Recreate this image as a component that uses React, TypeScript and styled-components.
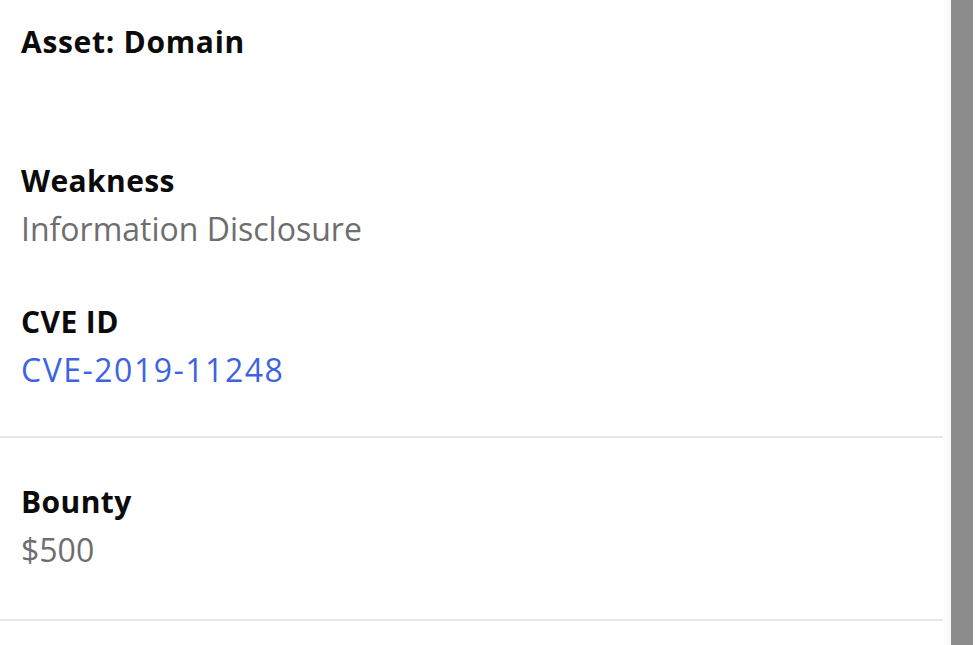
import * as React from "react";
import styled, { createGlobalStyle } from "styled-components";

const GlobalStyle = createGlobalStyle`
  html, body {
    margin: 0;
    padding: 0;
    background: #ffffff;
    font-family: "Open Sans", "Liberation Sans", sans-serif;
  }
`;

const Page = styled.div`
  display: flex;
  flex-direction: row;
  width: 980px;
  height: 645px;
  overflow: hidden;
`;

const Panel = styled.div`
  width: 943px;
  display: flex;
  flex-direction: column;
`;

const Section = styled.section<{ $top: number; $bottom: number }>`
  padding: ${(p) => p.$top}px 21px ${(p) => p.$bottom}px;
  border-bottom: 2px solid #e6e6e6;
`;

const AssetTitle = styled.h2`
  margin: 0 0 90px;
  font-size: 30px;
  line-height: 48px;
  font-weight: 700;
  letter-spacing: 0.7px;
  color: #0b0b0b;
`;

const Field = styled.div`
  display: flex;
  flex-direction: column;
  & + & {
    margin-top: 44px;
  }
`;

const Label = styled.div`
  font-size: 30px;
  line-height: 49px;
  font-weight: 700;
  letter-spacing: 0.4px;
  color: #0b0b0b;
`;

const Value = styled.div<{ $link?: boolean }>`
  font-size: 32px;
  line-height: 48px;
  font-weight: 400;
  letter-spacing: ${(p) => (p.$link ? "1.5px" : "0")};
  color: ${(p) => (p.$link ? "#3d63e3" : "#6e6e6e")};
`;

const Gutter = styled.div`
  width: 8px;
  background: linear-gradient(to right, #ffffff, #f7f7f7);
`;

const ScrollBar = styled.div`
  width: 22px;
  background: #8c8c8c;
`;

export default function App() {
  return (
    <>
      <GlobalStyle />
      <Page>
        <Panel>
          <Section $top={18} $bottom={42}>
            <AssetTitle>Asset: Domain</AssetTitle>
            <Field>
              <Label>Weakness</Label>
              <Value>Information Disclosure</Value>
            </Field>
            <Field>
              <Label>CVE ID</Label>
              <Value $link>CVE-2019-11248</Value>
            </Field>
          </Section>
          <Section $top={39} $bottom={45}>
            <Field>
              <Label>Bounty</Label>
              <Value>$500</Value>
            </Field>
          </Section>
        </Panel>
        <Gutter />
        <ScrollBar />
      </Page>
    </>
  );
}
